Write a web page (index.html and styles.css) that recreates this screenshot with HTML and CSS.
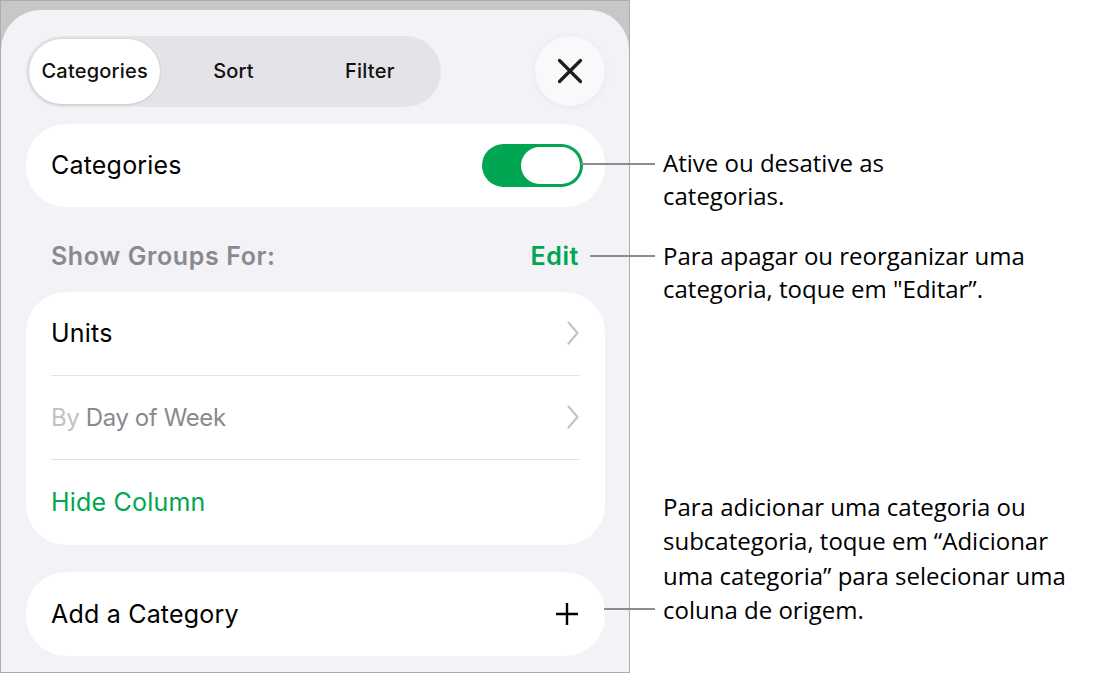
FILE: index.html
```html
<!DOCTYPE html>
<html lang="pt">
<head>
<meta charset="utf-8">
<title>Categories</title>
<link rel="stylesheet" href="styles.css">
</head>
<body>
<div class="page">
  <div class="device">
    <div class="panel">
      <div class="top-row">
        <div class="segmented">
          <div class="seg seg-active">Categories</div>
          <div class="seg">Sort</div>
          <div class="seg">Filter</div>
        </div>
        <button class="close-btn" aria-label="Close">
          <svg width="26" height="26" viewBox="0 0 26 26"><path d="M2.5 2.5 L23.5 23.5 M23.5 2.5 L2.5 23.5" stroke="#1c1c1e" stroke-width="3.2" stroke-linecap="round" fill="none"/></svg>
        </button>
      </div>

      <div class="card card-single">
        <span class="label">Categories</span>
        <div class="toggle"><div class="knob"></div></div>
      </div>

      <div class="section-head">
        <span class="section-title">Show Groups For:</span>
        <span class="section-action">Edit</span>
      </div>

      <div class="card card-list">
        <div class="row">
          <span class="label">Units</span>
          <svg class="chev" width="12" height="24" viewBox="0 0 12 24"><path d="M1.5 1.5 L10.5 12 L1.5 22.5" stroke="#c4c4c7" stroke-width="2.2" stroke-linecap="round" stroke-linejoin="round" fill="none"/></svg>
        </div>
        <div class="row">
          <span class="label muted"><span class="faint">By</span> Day of Week</span>
          <svg class="chev" width="12" height="24" viewBox="0 0 12 24"><path d="M1.5 1.5 L10.5 12 L1.5 22.5" stroke="#c4c4c7" stroke-width="2.2" stroke-linecap="round" stroke-linejoin="round" fill="none"/></svg>
        </div>
        <div class="row">
          <span class="label green">Hide Column</span>
        </div>
      </div>

      <div class="card card-single card-add">
        <span class="label">Add a Category</span>
        <svg width="24" height="24" viewBox="0 0 24 24"><path d="M12 1 V23 M1 12 H23" stroke="#000" stroke-width="2.4" fill="none"/></svg>
      </div>
    </div>
  </div>

  <div class="notes">
    <p class="note note-toggle">Ative ou desative as<br>categorias.</p>
    <p class="note note-edit">Para apagar ou reorganizar uma<br>categoria, toque em "Editar”.</p>
    <p class="note note-add">Para adicionar uma categoria ou<br>subcategoria, toque em “Adicionar<br>uma categoria” para selecionar uma<br>coluna de origem.</p>
  </div>
</div>
</body>
</html>
```

FILE: styles.css
```css
* { box-sizing: border-box; }

html, body {
  margin: 0;
  padding: 0;
  background: #ffffff;
}

.page {
  display: flex;
  width: 1111px;
  height: 673px;
}

.device {
  width: 630px;
  height: 673px;
  flex: none;
  border: 1.5px solid #acacac;
  background: #c7c7c7;
  padding-top: 8.5px;
  display: flex;
  flex-direction: column;
}

.panel {
  flex: 1;
  background: #f2f2f7;
  border-radius: 40px 40px 0 0;
  padding: 26px 24px 0 25px;
  font-family: Inter, "Liberation Sans", sans-serif;
  color: #000;
}

.top-row {
  display: flex;
  justify-content: space-between;
  align-items: center;
  height: 71px;
}

.segmented {
  width: 415px;
  height: 71px;
  border-radius: 36px;
  background: #e3e3e8;
  padding: 3px 3px;
  display: flex;
  align-items: stretch;
}

.seg {
  width: 137px;
  display: flex;
  align-items: center;
  justify-content: center;
  font-size: 20px;
  font-weight: 500;
  letter-spacing: 0.2px;
  color: #111;
  border-radius: 33px;
}

.seg-active {
  width: 132px;
  margin-right: 5px;
  background: #ffffff;
  box-shadow: 0 0 0 1px rgba(0,0,0,0.05), 0 1px 3px rgba(0,0,0,0.06);
}

.close-btn {
  width: 70px;
  height: 70px;
  border-radius: 50%;
  border: none;
  background: #f9f9fb;
  box-shadow: 0 1px 6px rgba(0,0,0,0.05);
  display: flex;
  align-items: center;
  justify-content: center;
  padding: 0;
}

.card {
  background: #ffffff;
  border-radius: 40px;
}

.card-single {
  margin-top: 17px;
  height: 83px;
  display: flex;
  align-items: center;
  justify-content: space-between;
  padding: 0 25px 0 25px;
}

.label {
  font-size: 25px;
  letter-spacing: 0.2px;
}

.toggle {
  width: 101px;
  height: 43px;
  border-radius: 22px;
  background: #00a651;
  padding: 3px 3px;
  display: flex;
  justify-content: flex-end;
  margin-right: -3px;
}

.knob {
  width: 59px;
  height: 37px;
  border-radius: 19px;
  background: #ffffff;
}

.section-head {
  height: 85px;
  display: flex;
  align-items: flex-start;
  justify-content: space-between;
  padding: 34px 26px 0 25px;
  font-size: 25px;
  font-weight: 600;
  letter-spacing: 0.6px;
  line-height: 30px;
}

.section-title { color: #8a8a8e; }
.section-action { color: #00a651; }

.card-list {
  padding: 0 25px;
}

.row {
  height: 84px;
  display: flex;
  align-items: center;
  justify-content: space-between;
  border-bottom: 1.5px solid #e4e4e6;
}

.row:last-child {
  border-bottom: none;
  height: 85px;
}

.chev { margin-right: 1px; }

.row .muted { font-size: 24px; letter-spacing: -0.4px; }
.muted { color: #8a8a8e; }
.faint { color: #c2c2c6; }
.green { color: #00a651; }

.card-add {
  margin-top: 27px;
  height: 84px;
}

.card-add svg { margin-right: 1px; }

.notes {
  margin-left: 33px;
  display: flex;
  flex-direction: column;
  font-family: "Open Sans", "Noto Sans", sans-serif;
  font-size: 24px;
  line-height: 33px;
  color: #000;
  letter-spacing: 0px;
}

.note {
  margin: 0;
  position: relative;
}

.note::before {
  content: "";
  position: absolute;
  height: 2px;
  background: #8c8c8c;
}

.note-toggle { margin-top: 146px; }
.note-toggle::before { left: -82px; width: 74px; top: 17px; }

.note-edit { margin-top: 27px; }
.note-edit::before { left: -73px; width: 65px; top: 16px; }

.note-add { margin-top: 185px; line-height: 34.3px; }
.note-add::before { left: -59px; width: 51px; bottom: 17px; }
```
